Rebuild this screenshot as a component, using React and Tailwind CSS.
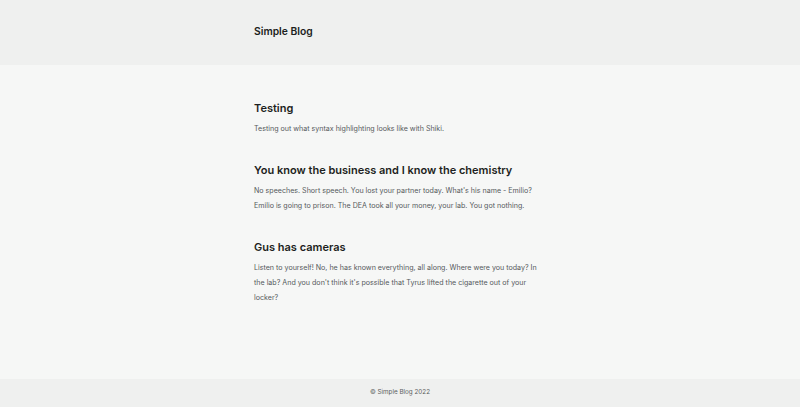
export default function App() {
  const posts = [
    { title: "Testing", body: "Testing out what syntax highlighting looks like with Shiki." },
    { title: "You know the business and I know the chemistry", body: "No speeches. Short speech. You lost your partner today. What's his name - Emilio? Emilio is going to prison. The DEA took all your money, your lab. You got nothing." },
    { title: "Gus has cameras", body: "Listen to yourself! No, he has known everything, all along. Where were you today? In the lab? And you don't think it's possible that Tyrus lifted the cigarette out of your locker?" },
  ];
  return (
    <div className="min-h-[407px] flex flex-col bg-[#f6f7f6]" style={{ fontFamily: "Inter, 'Noto Sans', sans-serif" }}>
      <header className="h-[65px] bg-[#eff0ef] flex items-center">
        <div className="w-[292px] mx-auto text-[10.3px] font-semibold text-[#1d1f21] pb-[1px]">Simple Blog</div>
      </header>
      <main className="flex-1">
        <div className="w-[292px] mx-auto pt-[36px] flex flex-col gap-[27px]">
          {posts.map((p) => (
            <article key={p.title}>
              <h2 className="text-[11px] font-semibold text-[#1d1f21] leading-[14px]">{p.title}</h2>
              <p className="mt-[6px] max-w-[284px] text-[7.1px] leading-[15px] text-[#55595c]">{p.body}</p>
            </article>
          ))}
        </div>
      </main>
      <footer className="h-[28px] bg-[#eff0ef] flex items-center justify-center text-[6.3px] text-[#5b5e60]">
        © Simple Blog 2022
      </footer>
    </div>
  );
}
